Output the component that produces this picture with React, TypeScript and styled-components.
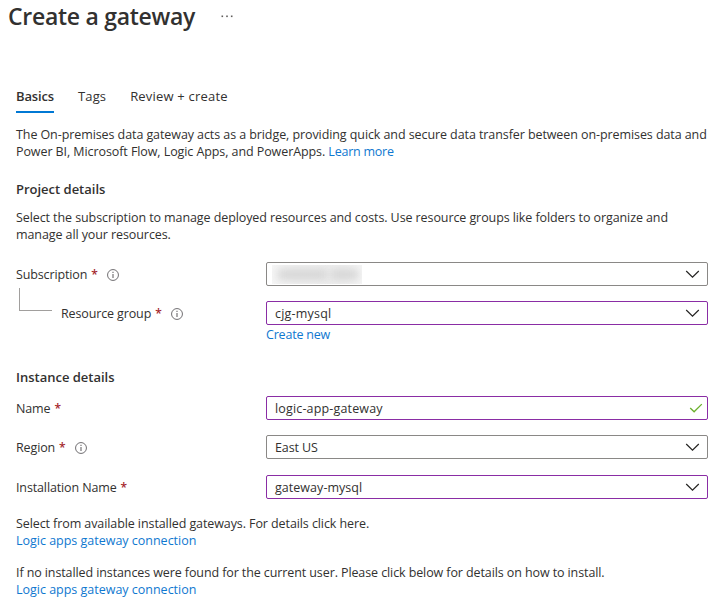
import React from "react";
import styled, { createGlobalStyle } from "styled-components";

const GlobalStyle = createGlobalStyle`
  * { box-sizing: border-box; }
  body {
    margin: 0;
    background: #fff;
    color: #323130;
    font: 12.5px/17px "Open Sans", "Noto Sans", sans-serif;
    letter-spacing: -0.09px;
  }
`;

const Page = styled.main`
  width: 725px;
  height: 609px;
  overflow: hidden;
  display: flex;
  flex-direction: column;
`;

const Header = styled.header`
  display: flex;
  height: 84px;
  padding-left: 8px;
  gap: 26px;
`;

const Title = styled.h1`
  margin: 0;
  font-size: 23px;
  line-height: 32px;
  font-weight: 600;
  letter-spacing: -0.28px;
  white-space: nowrap;
`;

const MoreIcon = styled.svg`
  width: 12px;
  height: 3px;
  margin-top: 15px;
  fill: #605e5c;
`;

const Tabs = styled.nav`
  display: flex;
  height: 29px;
  padding-left: 16px;
  gap: 24px;
`;

const Tab = styled.a<{ $active?: boolean; $spacing: number }>`
  padding-top: 4px;
  font-size: 13px;
  font-weight: ${(p) => (p.$active ? 600 : 400)};
  letter-spacing: ${(p) => p.$spacing}px;
  border-bottom: 2px solid ${(p) => (p.$active ? "#0078d4" : "transparent")};
  white-space: nowrap;
`;

const Content = styled.div`
  display: flex;
  flex-direction: column;
  padding: 13px 17px 0 16px;
`;

const Copy = styled.p<{ $gap?: number; $spacing?: number }>`
  margin: ${(p) => p.$gap ?? 0}px 0 0;
  letter-spacing: ${(p) => p.$spacing ?? -0.09}px;
  white-space: nowrap;
`;

const Link = styled.a<{ $spacing?: number }>`
  color: #0f78d0;
  letter-spacing: ${(p) => p.$spacing ?? -0.01}px;
`;

const Heading = styled.h2<{ $gap: number }>`
  margin: ${(p) => p.$gap}px 0 0;
  font-size: 13px;
  line-height: 17px;
  font-weight: 600;
  letter-spacing: -0.01px;
`;

const Row = styled.div<{ $gap: number }>`
  display: grid;
  grid-template-columns: 250px 442px;
  margin-top: ${(p) => p.$gap}px;
`;

const Label = styled.label<{ $nested?: boolean }>`
  display: flex;
  align-items: center;
  height: 24px;
  padding-left: ${(p) => (p.$nested ? 3 : 0)}px;
  letter-spacing: -0.13px;
  white-space: nowrap;
`;

const Branch = styled.span`
  align-self: flex-end;
  width: 33px;
  height: 23px;
  margin: 0 9px 14px 0;
  border: solid #a19f9d;
  border-width: 0 0 1px 1px;
`;

const Star = styled.span`
  width: 6px;
  margin-left: 4px;
  color: #a4262c;
  font-size: 12px;
  font-weight: 600;
`;

const InfoSvg = styled.svg`
  width: 12px;
  height: 12px;
  margin: 2px 0 0 10px;
`;

const Field = styled.div<{ $edited?: boolean; $spacing?: number }>`
  display: flex;
  align-items: center;
  justify-content: space-between;
  height: 24px;
  padding: 0 7px 0 8px;
  border: 1px solid ${(p) => (p.$edited ? "#8a2da5" : "#8a8886")};
  border-radius: 2px;
  letter-spacing: ${(p) => p.$spacing ?? 0}px;
`;

const Redacted = styled.span`
  display: flex;
  align-items: center;
  width: 90px;
  height: 19px;
  margin-left: -3px;
  padding-left: 6px;
  overflow: hidden;
  background: linear-gradient(90deg, #f6f6f6, #efefef 25%, #eee 80%, #f5f5f5);
`;

const Smudge = styled.span<{ $width: number }>`
  width: ${(p) => p.$width}px;
  height: 9px;
  margin-right: 4px;
  background: #d2d2d2;
  filter: blur(4px);
`;

const Glyph = styled.svg`
  display: block;
  flex: none;
  width: 15px;
  height: 10px;
  fill: none;
  overflow: visible;
`;

const Info = () => (
  <InfoSvg viewBox="0 0 12 12" fill="none" stroke="#69676a">
    <circle cx="6" cy="6" r="5.45" strokeWidth="0.95" />
    <path d="M6 5v4" strokeWidth="1.1" />
    <path d="M6 2.8v1.1" strokeWidth="1.1" />
  </InfoSvg>
);

const Chevron = () => (
  <Glyph viewBox="0 0 15 10" stroke="#252423" strokeWidth="1.2">
    <path d="M1.2 2l6.3 6.2L13.8 2" />
  </Glyph>
);

const Check = () => (
  <Glyph viewBox="0 0 15 10" stroke="#6bb02c" strokeWidth="1.3">
    <path d="M5.2 5l3.9 3.8L16.8 1.1" />
  </Glyph>
);

export default function App() {
  return (
    <Page>
      <GlobalStyle />
      <Header>
        <Title>Create a gateway</Title>
        <MoreIcon viewBox="0 0 12 3">
          <rect x="0.5" y="0.5" width="1.6" height="1.6" />
          <rect x="5.2" y="0.5" width="1.6" height="1.6" />
          <rect x="9.9" y="0.5" width="1.6" height="1.6" />
        </MoreIcon>
      </Header>
      <Tabs>
        <Tab $active $spacing={-0.13}>Basics</Tab>
        <Tab $spacing={0.1}>Tags</Tab>
        <Tab $spacing={0.2}>Review + create</Tab>
      </Tabs>
      <Content>
        <Copy $spacing={-0.083}>
          The On-premises data gateway acts as a bridge, providing quick and secure data transfer between on-premises data and
          <br />
          Power BI, Microsoft Flow, Logic Apps, and PowerApps. <Link $spacing={-0.23}>Learn more</Link>
        </Copy>
        <Heading $gap={21}>Project details</Heading>
        <Copy $gap={11}>
          Select the subscription to manage deployed resources and costs. Use resource groups like folders to organize and
          <br />
          manage all your resources.
        </Copy>
        <Row $gap={19}>
          <Label>Subscription<Star>*</Star><Info /></Label>
          <Field>
            <Redacted>
              <Smudge $width={49} />
              <Smudge $width={27} />
            </Redacted>
            <Chevron />
          </Field>
        </Row>
        <Row $gap={15}>
          <Label $nested><Branch />Resource group<Star>*</Star><Info /></Label>
          <div>
            <Field $edited $spacing={0.2}>cjg-mysql<Chevron /></Field>
            <Copy $gap={1}><Link $spacing={-0.2}>Create new</Link></Copy>
          </div>
        </Row>
        <Heading $gap={26}>Instance details</Heading>
        <Row $gap={10}>
          <Label>Name<Star>*</Star></Label>
          <Field $edited $spacing={0.16}>logic-app-gateway<Check /></Field>
        </Row>
        <Row $gap={15}>
          <Label>Region<Star>*</Star><Info /></Label>
          <Field $spacing={-0.13}>East US<Chevron /></Field>
        </Row>
        <Row $gap={16}>
          <Label>Installation Name<Star>*</Star></Label>
          <Field $edited $spacing={0.04}>gateway-mysql<Chevron /></Field>
        </Row>
        <Copy $gap={16}>
          Select from available installed gateways. For details click here.
          <br />
          <Link>Logic apps gateway connection</Link>
        </Copy>
        <Copy $gap={15} $spacing={-0.1}>
          If no installed instances were found for the current user. Please click below for details on how to install.
          <br />
          <Link>Logic apps gateway connection</Link>
        </Copy>
      </Content>
    </Page>
  );
}
